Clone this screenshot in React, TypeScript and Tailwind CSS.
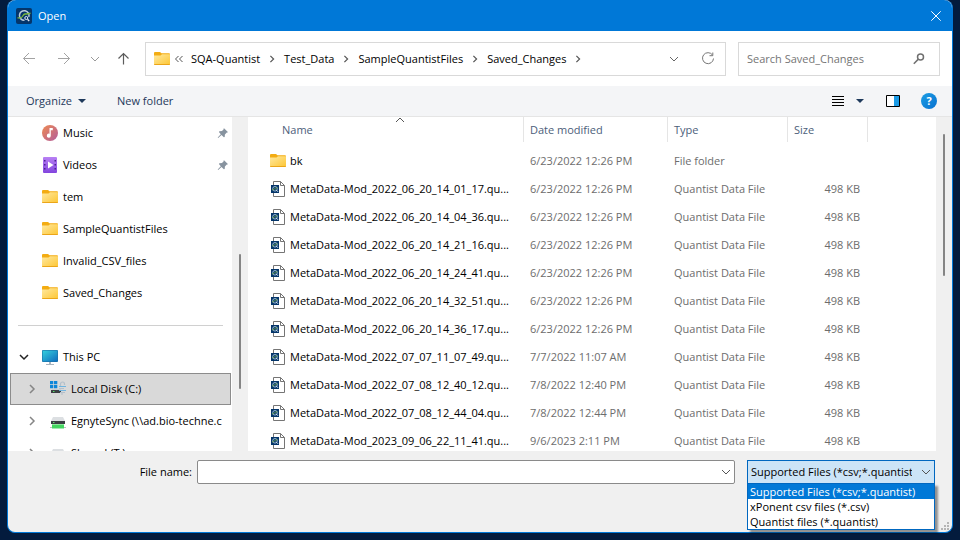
import React from 'react';

type Kind = 'folder' | 'file';
interface Entry {
  name: string;
  date: string;
  type: string;
  size: string;
  kind: Kind;
}

const quantist = (stamp: string, date: string): Entry => ({
  name: `MetaData-Mod_${stamp}.qu...`,
  date,
  type: 'Quantist Data File',
  size: '498 KB',
  kind: 'file',
});

const entries: Entry[] = [
  { name: 'bk', date: '6/23/2022 12:26 PM', type: 'File folder', size: '', kind: 'folder' },
  quantist('2022_06_20_14_01_17', '6/23/2022 12:26 PM'),
  quantist('2022_06_20_14_04_36', '6/23/2022 12:26 PM'),
  quantist('2022_06_20_14_21_16', '6/23/2022 12:26 PM'),
  quantist('2022_06_20_14_24_41', '6/23/2022 12:26 PM'),
  quantist('2022_06_20_14_32_51', '6/23/2022 12:26 PM'),
  quantist('2022_06_20_14_36_17', '6/23/2022 12:26 PM'),
  quantist('2022_07_07_11_07_49', '7/7/2022 11:07 AM'),
  quantist('2022_07_08_12_40_12', '7/8/2022 12:40 PM'),
  quantist('2022_07_08_12_44_04', '7/8/2022 12:44 PM'),
  quantist('2023_09_06_22_11_41', '9/6/2023 2:11 PM'),
];

const crumbs = ['SQA-Quantist', 'Test_Data', 'SampleQuantistFiles', 'Saved_Changes'];
const filters = ['Supported Files (*csv;*.quantist)', 'xPonent csv files (*.csv)', 'Quantist files (*.quantist)'];

function Chevron({ dir, className, width = 1 }: { dir: 'down' | 'right' | 'up'; className: string; width?: number }) {
  const d = { down: 'M1 3l4 4 4-4', right: 'M3 1l4 4-4 4', up: 'M1 7l4-4 4 4' }[dir];
  return (
    <svg viewBox="0 0 10 10" className={className} fill="none" stroke="currentColor" strokeWidth={width} aria-hidden="true">
      <path d={d} />
    </svg>
  );
}

function AppLogo() {
  return (
    <svg viewBox="0 0 16 16" className="size-4 shrink-0" fill="none" aria-hidden="true">
      <rect width="16" height="16" rx="2" fill="#04356a" />
      <path d="M12.800 9A4.800 4.800 0 1 0 8.500 12.300" stroke="#b9cbdc" strokeWidth="1.500" />
      <path d="M1.500 9.800h3.200C6.500 9.800 7 6 9 6s3 .2 5.500-.8" stroke="#7cb83f" strokeWidth="1.300" />
      <circle cx="10.300" cy="10" r="1.500" stroke="#e6edf4" strokeWidth="1" />
      <path d="M11.500 11.300l1.700 1.700" stroke="#e6edf4" strokeWidth="1.300" />
    </svg>
  );
}

function FolderIcon() {
  return (
    <svg viewBox="0 0 16 16" className="size-4 shrink-0" aria-hidden="true">
      <defs>
        <linearGradient id="folderFace" x1="0" y1="0" x2="1" y2="1">
          <stop offset="0" stopColor="#ffe9a0" />
          <stop offset="1" stopColor="#fdc634" />
        </linearGradient>
      </defs>
      <path d="M0 2Q0 1 1 1h5l1.500 1.200H15q1 0 1 1v5H0z" fill="#f3ac12" />
      <path d="M0 4.500h6.500L8 3.200h8V13q0 .8-.8.800H.8Q0 13.800 0 13z" fill="url(#folderFace)" />
      <path d="M0 13h16q0 1-.8 1H.8Q0 14 0 13z" fill="#eba518" />
    </svg>
  );
}

function FileIcon() {
  return (
    <svg viewBox="0 0 16 16" className="size-4 shrink-0" fill="none" aria-hidden="true">
      <path d="M3.500.5h7l4 4v11h-11z" fill="#fff" stroke="#757575" />
      <path d="M10.500.5v4h4" stroke="#757575" />
      <rect x="1" y="4" width="8" height="8" fill="#04356a" />
      <circle cx="5" cy="7.800" r="2.300" stroke="#a9c3da" strokeWidth=".9" />
      <path d="M2 9c2 0 2-2 5.500-2.200" stroke="#7cb83f" strokeWidth=".7" />
      <path d="M6 8.800l2 2" stroke="#dce5ee" />
    </svg>
  );
}

function MusicIcon() {
  return (
    <svg viewBox="0 0 16 16" className="size-4 shrink-0" aria-hidden="true">
      <defs>
        <linearGradient id="musicDisc" x1="0" y1="0" x2="1" y2="1">
          <stop offset="0" stopColor="#ee8a52" />
          <stop offset="1" stopColor="#b35d9c" />
        </linearGradient>
      </defs>
      <circle cx="8" cy="8" r="8" fill="url(#musicDisc)" />
      <path d="M7.500 3h3.300v2.200H8.800v5.500a2 2 0 1 1-1.300-1.900z" fill="#fff" />
    </svg>
  );
}

function VideoIcon() {
  return (
    <svg viewBox="0 0 16 16" className="size-4 shrink-0" aria-hidden="true">
      <defs>
        <linearGradient id="videoFace" x1="0" y1="0" x2="0" y2="1">
          <stop offset="0" stopColor="#b880f4" />
          <stop offset="1" stopColor="#8245de" />
        </linearGradient>
      </defs>
      <rect x="1" width="14" height="16" rx="1" fill="url(#videoFace)" />
      <path d="M2 3h1.500v1.500H2zM2 7h1.500v1.500H2zM2 11h1.500v1.500H2zM12.500 3H14v1.500h-1.500zM12.500 7H14v1.500h-1.500zM12.500 11H14v1.500h-1.500z" fill="#4b2291" />
      <path d="M6 4.500v7L11.500 8z" fill="#fff" />
    </svg>
  );
}

function PcIcon() {
  return (
    <svg viewBox="0 0 16 16" className="size-4 shrink-0" aria-hidden="true">
      <defs>
        <linearGradient id="pcScreen" x1="0" y1="0" x2="1" y2="1">
          <stop offset="0" stopColor="#35d0dd" />
          <stop offset="1" stopColor="#0f6cbe" />
        </linearGradient>
      </defs>
      <rect y="1" width="16" height="12" rx="1" fill="#1a6fa8" />
      <rect x=".6" y="1.600" width="14.800" height="10.800" fill="url(#pcScreen)" />
      <path d="M7 13h2v2h3v1H4v-1h3z" fill="#a9b4bf" />
    </svg>
  );
}

function LocalDiskIcon() {
  return (
    <svg viewBox="0 0 16 16" className="size-4 shrink-0" fill="none" aria-hidden="true">
      <path d="M0 0h3.300v3.300H0zM4 0h3.300v3.300H4zM0 4h3.300v3.300H0zM4 4h3.300v3.300H4z" fill="#0f86d8" />
      <path d="M2 8h9v1H2z" fill="#c9cdd1" />
      <rect x="1" y="9" width="10" height="3" fill="#3c4043" />
      <rect x="3" y="10" width="1.500" height="1" fill="#54e06a" />
      <path d="M10.500 5V3a2 2 0 0 1 4 0v1" stroke="#b3bfca" strokeWidth="1.200" />
      <path d="M9 5.500h7M9 9.500h7" stroke="#6fb4e0" />
      <path d="M9 7.500h5M10 11.500h5M11 13h2" stroke="#b3bfca" />
    </svg>
  );
}

function NetDriveIcon({ idle = false }: { idle?: boolean }) {
  return (
    <svg viewBox="0 0 16 16" className="size-4 shrink-0" aria-hidden="true">
      <path d="M3 4h10l2 4H1z" fill="#dcdfe2" />
      <rect x="1" y="8" width="14" height="3" fill="#3a3e42" />
      <rect x="3" y="9" width="1.500" height="1" fill={idle ? '#9aa0a6' : '#62e36f'} />
      <path d="M0 14h16v1H0z" fill="#b9c4bd" />
      <path d="M2 11h12v4.500H2z" fill="#43d660" />
      <path d="M2 11h12v1H2z" fill="#8be79b" />
    </svg>
  );
}

function PinIcon() {
  return (
    <svg viewBox="0 0 12 12" className="size-3 shrink-0" aria-hidden="true">
      <path d="M6.800.9l4.300 4.300-1.300.3-1.900 1.900-.2 2.500-.8.400-2.400-2.400L1.200 11l-.5-.4 3.100-3.300L1.900 5l.5-.8 2.600-.2 1.700-1.800z" fill="#87939f" />
    </svg>
  );
}

function TreeRow({ icon, label, pinned, nested, open, selected }: {
  icon: React.ReactNode; label: string; pinned?: boolean; nested?: boolean; open?: boolean; selected?: boolean;
}) {
  return (
    <li className="h-8 shrink-0 pl-0.5 pr-px">
      <button
        type="button"
        className={`flex h-full w-full items-center overflow-hidden border text-left ${selected ? 'border-[#8c8c8c] bg-[#d9d9d9]' : 'border-transparent'}`}
      >
        <span className={`flex shrink-0 ${nested ? 'w-[39px] pl-4' : 'w-[31px] pl-2'}`}>
          {nested && <Chevron dir="right" width={1.5} className="size-2.5 text-[#858585]" />}
          {open && <Chevron dir="down" width={1.5} className="size-2.5 text-[#222]" />}
        </span>
        {icon}
        <span className="ml-[5px] whitespace-nowrap">{label}</span>
        {pinned && <span className="ml-auto pr-px"><PinIcon /></span>}
      </button>
    </li>
  );
}

function HeadCell({ label, className }: { label: string; className: string }) {
  return (
    <th scope="col" className={`p-0 align-top font-normal ${className}`}>
      <div className="flex h-[25px] items-center border-r border-[#e5e5e5] pl-1.5 text-left text-[#4c607a]">{label}</div>
    </th>
  );
}

export default function App() {
  return (
    <div className="flex h-screen flex-col bg-[#031b3d] px-[7px] pb-[7px] font-['Open_Sans','Noto_Sans',sans-serif] text-[11px] leading-4 text-black">
      <div className="flex min-h-0 flex-1 flex-col rounded-lg border border-t-0 border-[#0078d7] bg-[#f0f0f0]">
        <header className="flex h-[31px] shrink-0 items-center rounded-t-lg bg-[#0078d7] pl-2 pr-2 text-white">
          <AppLogo />
          <h1 className="ml-1.5 text-[11px]">Open</h1>
          <button type="button" aria-label="Close" className="ml-auto flex size-4 items-center justify-center">
            <svg viewBox="0 0 10 10" className="size-2.5" stroke="currentColor" fill="none">
              <path d="M.3.3l9.400 9.400M9.700.3L.3 9.700" />
            </svg>
          </button>
        </header>

        <nav className="flex h-[55px] shrink-0 items-center bg-white pr-3 pl-3.5" aria-label="Location">
          <button type="button" aria-label="Back" className="w-[35px]">
            <svg viewBox="0 0 14 14" className="size-3.5" fill="none" stroke="#a3a3a3">
              <path d="M13 6.500H1.500M7 1L1.500 6.500 7 12" />
            </svg>
          </button>
          <button type="button" aria-label="Forward" className="w-[33px]">
            <svg viewBox="0 0 14 14" className="size-3.5" fill="none" stroke="#a3a3a3">
              <path d="M1 6.500h11.500M7 1l5.500 5.500L7 12" />
            </svg>
          </button>
          <button type="button" aria-label="Recent locations" className="w-7">
            <Chevron dir="down" className="size-2.5 text-[#9a9a9a]" />
          </button>
          <button type="button" aria-label="Up" className="w-[27px]">
            <svg viewBox="0 0 12 14" className="h-3.5 w-3" fill="none" stroke="#5c5c5c" strokeWidth="1.200">
              <path d="M5.500 12.500v-11M.5 6.500l5-5 5 5" />
            </svg>
          </button>
          <div className="flex h-[34px] min-w-0 flex-1 items-center border border-[#d9d9d9] pl-2">
            <FolderIcon />
            <svg viewBox="0 0 10 8" className="ml-1 h-2 w-2.5 shrink-0" fill="none" stroke="#555">
              <path d="M4.500 1l-3 3 3 3M8.500 1l-3 3 3 3" />
            </svg>
            <ol className="ml-[7px] flex items-center">
              {crumbs.map((crumb) => (
                <li key={crumb} className="flex items-center">
                  <a href="#" className="whitespace-nowrap">{crumb}</a>
                  <Chevron dir="right" width={1.5} className="mx-2 size-2 text-[#555]" />
                </li>
              ))}
            </ol>
            <button type="button" aria-label="Previous locations" className="ml-auto w-8">
              <Chevron dir="down" className="size-2.5 text-[#666]" />
            </button>
            <button type="button" aria-label="Refresh" className="mr-2.5">
              <svg viewBox="0 0 14 14" className="size-3.5" fill="none" stroke="#777">
                <path d="M11.500 3A5.500 5.500 0 1 0 12.500 6.500M11.800.5v3.200H8.500" />
              </svg>
            </button>
          </div>
          <label className="ml-3 flex h-[34px] w-[202px] items-center border border-[#d9d9d9] pl-2">
            <input type="search" aria-label="Search Saved_Changes" placeholder="Search Saved_Changes" className="min-w-0 flex-1 outline-none placeholder:text-[#757575]" />
            <svg viewBox="0 0 12 12" className="mr-3.5 size-3 shrink-0" fill="none" stroke="#707070" strokeWidth="1.500">
              <circle cx="7.500" cy="4" r="3" />
              <path d="M5.400 6.100L.8 10.700" />
            </svg>
          </label>
        </nav>

        <div className="flex h-[31px] shrink-0 items-center border-b border-[#e5e5e5] bg-[#f4f5f7] pl-[18px] pr-[15px] text-[#1e395b]" role="toolbar">
          <button type="button" className="flex items-center gap-1.5">
            Organize
            <svg viewBox="0 0 8 4" className="h-1 w-2" fill="currentColor"><path d="M0 0h8L4 4z" /></svg>
          </button>
          <button type="button" className="ml-[31px]">New folder</button>
          <button type="button" aria-label="View" className="ml-auto">
            <svg viewBox="0 0 12 10" className="h-2.5 w-3" fill="#000"><path d="M0 0h12v1H0zM0 3h12v1H0zM0 6h12v1H0zM0 9h12v1H0z" /></svg>
          </button>
          <button type="button" aria-label="More views" className="ml-3">
            <svg viewBox="0 0 8 4" className="h-1 w-2" fill="currentColor"><path d="M0 0h8L4 4z" /></svg>
          </button>
          <button type="button" aria-label="Preview pane" className="ml-[22px]">
            <svg viewBox="0 0 14 12" className="h-3 w-3.5"><path d="M.5.5h13v11H.5z" fill="#fff" /><path d="M8 1h5v10H8z" fill="#1b9be6" /><path d="M.5.5h13v11H.5z" fill="none" stroke="#000" /></svg>
          </button>
          <button type="button" aria-label="Help" className="ml-[21px] size-4 rounded-full bg-linear-to-br from-[#1d9ee4] to-[#0a70cf] text-[11px] leading-4 font-bold text-white">?</button>
        </div>

        <main className="flex min-h-0 flex-1 bg-white">
          <aside className="w-56 shrink-0 overflow-hidden">
            <ul className="flex flex-col">
              <TreeRow icon={<MusicIcon />} label="Music" pinned />
              <TreeRow icon={<VideoIcon />} label="Videos" pinned />
              <TreeRow icon={<FolderIcon />} label="tem" />
              <TreeRow icon={<FolderIcon />} label="SampleQuantistFiles" />
              <TreeRow icon={<FolderIcon />} label="Invalid_CSV_files" />
              <TreeRow icon={<FolderIcon />} label="Saved_Changes" />
              <li role="separator" className="flex h-8 shrink-0 items-center pl-2.5 pr-[9px]">
                <div className="h-px w-full bg-[#d0d0d0]" />
              </li>
              <TreeRow icon={<PcIcon />} label="This PC" open />
              <TreeRow icon={<LocalDiskIcon />} label="Local Disk (C:)" nested selected />
              <TreeRow icon={<NetDriveIcon />} label="EgnyteSync (\\ad.bio-techne.c" nested />
              <TreeRow icon={<NetDriveIcon idle />} label="Shared (T:)" nested />
            </ul>
          </aside>
          <div className="flex w-4 shrink-0 justify-center bg-[#f0f0f0] pt-[137px]">
            <div className="h-[135px] w-0.5 rounded-full bg-[#858585]" />
          </div>

          <section className="relative min-w-0 flex-1 overflow-hidden">
            <Chevron dir="up" className="absolute top-[-2px] left-[147px] size-2.5 text-[#555]" />
            <table className="w-full table-fixed border-collapse">
              <thead>
                <tr className="h-[30px]">
                  <th scope="col" className="w-[276px] p-0 align-top font-normal">
                    <div className="flex h-[25px] items-center border-r border-[#e5e5e5] pl-[34px] text-[#4c607a]">Name</div>
                  </th>
                  <HeadCell label="Date modified" className="w-36" />
                  <HeadCell label="Type" className="w-[120px]" />
                  <HeadCell label="Size" className="w-20" />
                  <td />
                </tr>
              </thead>
              <tbody>
                {entries.map((e) => (
                  <tr key={e.name} className="h-7 whitespace-nowrap text-[#6d6d6d]">
                    <td className="p-0 pl-[22px] text-black">
                      <span className="flex items-center gap-1">
                        {e.kind === 'folder' ? <FolderIcon /> : <FileIcon />}
                        {e.name}
                      </span>
                    </td>
                    <td className="p-0 pl-1.5">{e.date}</td>
                    <td className="p-0 pl-1.5">{e.type}</td>
                    <td className="p-0 pr-2 text-right">{e.size}</td>
                    <td />
                  </tr>
                ))}
              </tbody>
            </table>
          </section>
          <div className="flex w-4 shrink-0 justify-center bg-[#f0f0f0] pt-[17px]">
            <div className="h-[142px] w-0.5 rounded-full bg-[#858585]" />
          </div>
        </main>

        <footer className="relative flex h-[81px] shrink-0 items-start rounded-b-lg pt-[9px] pr-[17px]">
          <label htmlFor="filename" className="w-[189px] shrink-0 pr-[5px] text-right leading-6">File name:</label>
          <div className="flex h-6 min-w-0 flex-1 items-center rounded-xs border border-[#8a8a8a] bg-white">
            <input id="filename" type="text" className="h-full min-w-0 flex-1 px-1 outline-none" />
            <button type="button" aria-label="Recent file names" className="pr-[3px]">
              <Chevron dir="down" className="size-2.5 text-[#555]" />
            </button>
          </div>
          <div className="relative ml-3 w-[188px] shrink-0">
            <select aria-label="File type" className="block h-6 w-full appearance-none border border-[#0067c0] bg-[#cce4f7] pl-[3px] pr-[22px]">
              {filters.map((f) => <option key={f}>{f}</option>)}
            </select>
            <Chevron dir="down" className="pointer-events-none absolute top-[7px] right-1 size-2.5 text-[#555]" />
            <ul role="listbox" aria-label="File types" className="absolute top-[23px] left-0 w-full border border-[#0067c0] bg-white shadow-[3px_3px_2px_rgba(0,0,0,0.4)]">
              {filters.map((f, i) => (
                <li key={f} role="option" aria-selected={i === 0} className={`h-[15px] pl-0.5 leading-[15px] whitespace-nowrap ${i === 0 ? 'bg-[#0078d7] text-white' : ''}`}>{f}</li>
              ))}
            </ul>
          </div>
          <svg viewBox="0 0 8 8" className="absolute right-[3px] bottom-0.5 size-2" fill="#b5b5b5" aria-hidden="true">
            <path d="M6 0h2v2H6zM3 3h2v2H3zM6 3h2v2H6zM0 6h2v2H0zM3 6h2v2H3zM6 6h2v2H6z" />
          </svg>
        </footer>
      </div>
    </div>
  );
}
